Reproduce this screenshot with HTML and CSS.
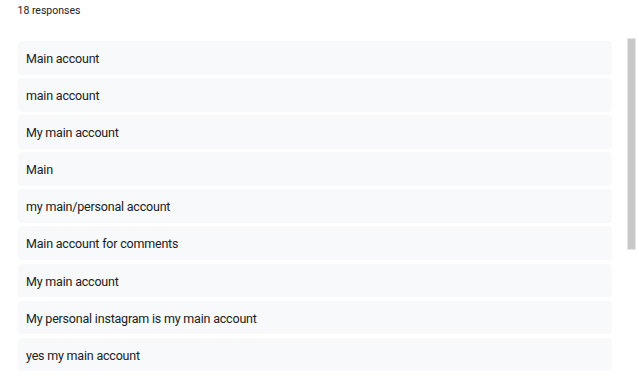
FILE: index.html
```html
<!DOCTYPE html>
<html lang="en">
<head>
    <meta charset="UTF-8">
    <meta name="viewport" content="width=device-width, initial-scale=1.0">
    <title>Responses</title>
    <link rel="stylesheet" href="styles.css">
</head>
<body>
    <div class="panel">
        <div class="count">18 responses</div>
        <div class="answers">
            <div class="answer">Main account</div>
            <div class="answer">main account</div>
            <div class="answer">My main account</div>
            <div class="answer">Main</div>
            <div class="answer">my main/personal account</div>
            <div class="answer">Main account for comments</div>
            <div class="answer">My main account</div>
            <div class="answer">My personal instagram is my main account</div>
            <div class="answer">yes my main account</div>
        </div>
        <div class="thumb"></div>
    </div>
</body>
</html>
```

FILE: styles.css
```css
body {
    margin: 0;
    font-family: Roboto, "Liberation Sans", sans-serif;
    color: #202124;
    background: #ffffff;
}
.panel {
    position: relative;
    height: 384px;
    overflow: hidden;
    padding: 0 27px 0 17.5px;
}
.count {
    font-size: 10.5px;
    line-height: 14px;
    padding: 4px 0 0 0;
    margin-bottom: 23px;
}
.answers {
    display: flex;
    flex-direction: column;
    gap: 3.6px;
}
.answer {
    background: #f8f9fa;
    border-radius: 4px;
    height: 33.5px;
    line-height: 35px;
    padding-left: 8.5px;
    font-size: 12.5px;
    letter-spacing: -0.2px;
    overflow: hidden;
}
.thumb {
    position: absolute;
    top: 38px;
    left: 626.5px;
    width: 7px;
    height: 210px;
    background: #c8c8c8;
    border: 1px solid #e6e6e6;
}
```
